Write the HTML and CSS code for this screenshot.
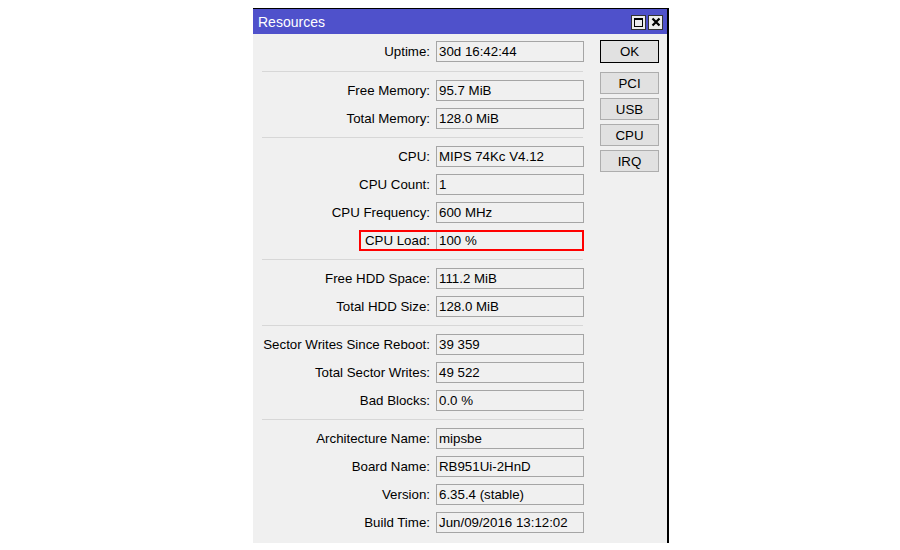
FILE: index.html
```html
<!DOCTYPE html>
<html lang="en">
<head>
    <meta charset="UTF-8">
    <title>Resources</title>
    <link rel="stylesheet" href="styles.css">
</head>
<body>
    <div class="window">
        <div class="titlebar">
            <span class="title">Resources</span>
            <div class="title-buttons">
                <span class="tb-btn"><span class="max-icon"></span></span>
                <span class="tb-btn">
                    <svg width="10" height="10" viewBox="0 0 10 10"><path d="M1.5 1.5 L8.5 8.5 M8.5 1.5 L1.5 8.5" stroke="#000" stroke-width="2.2"/></svg>
                </span>
            </div>
        </div>

        <div class="content">
            <div class="form">
                <div class="group">
                    <div class="row"><label>Uptime:</label><div class="field">30d 16:42:44</div></div>
                </div>
                <div class="sep first"></div>
                <div class="group">
                    <div class="row"><label>Free Memory:</label><div class="field">95.7 MiB</div></div>
                    <div class="row"><label>Total Memory:</label><div class="field">128.0 MiB</div></div>
                </div>
                <div class="sep"></div>
                <div class="group">
                    <div class="row"><label>CPU:</label><div class="field">MIPS 74Kc V4.12</div></div>
                    <div class="row"><label>CPU Count:</label><div class="field">1</div></div>
                    <div class="row"><label>CPU Frequency:</label><div class="field">600 MHz</div></div>
                    <div class="row highlighted"><label>CPU Load:</label><div class="field">100 %</div><span class="mark"></span></div>
                </div>
                <div class="sep"></div>
                <div class="group">
                    <div class="row"><label>Free HDD Space:</label><div class="field">111.2 MiB</div></div>
                    <div class="row"><label>Total HDD Size:</label><div class="field">128.0 MiB</div></div>
                </div>
                <div class="sep"></div>
                <div class="group">
                    <div class="row"><label>Sector Writes Since Reboot:</label><div class="field">39 359</div></div>
                    <div class="row"><label>Total Sector Writes:</label><div class="field">49 522</div></div>
                    <div class="row"><label>Bad Blocks:</label><div class="field">0.0 %</div></div>
                </div>
                <div class="sep"></div>
                <div class="group">
                    <div class="row"><label>Architecture Name:</label><div class="field">mipsbe</div></div>
                    <div class="row"><label>Board Name:</label><div class="field">RB951Ui-2HnD</div></div>
                    <div class="row"><label>Version:</label><div class="field">6.35.4 (stable)</div></div>
                    <div class="row"><label>Build Time:</label><div class="field">Jun/09/2016 13:12:02</div></div>
                </div>
            </div>

            <div class="buttons">
                <button class="btn default">OK</button>
                <div class="btn-list">
                    <button class="btn">PCI</button>
                    <button class="btn">USB</button>
                    <button class="btn">CPU</button>
                    <button class="btn">IRQ</button>
                </div>
            </div>
        </div>
    </div>
</body>
</html>
```

FILE: styles.css
```css
body {
    margin: 0;
    padding: 0;
    background-color: #ffffff;
    font-family: 'Liberation Sans', Arial, sans-serif;
    font-size: 13.3px;
    color: #000;
}

.window {
    margin: 8px 0 0 253px;
    width: 414px;
    height: 534px;
    border-top: 1px solid #000;
    border-right: 2px solid #000;
    background-color: #f0f0f0;
    overflow: hidden;
}

.titlebar {
    height: 25px;
    background-color: #4f51cb; /* Winbox blue */
    display: flex;
    align-items: center;
    justify-content: space-between;
    padding: 0 4px 0 5px;
}

.title {
    color: #fff;
    font-size: 14px;
}

.title-buttons {
    display: flex;
    gap: 2px;
    margin-top: 1px;
}

.tb-btn {
    width: 13px;
    height: 13px;
    border: 1px solid #333;
    background-color: #ececec;
    display: flex;
    align-items: center;
    justify-content: center;
}

.max-icon {
    width: 7px;
    height: 6px;
    border: 1px solid #000;
    border-top-width: 2px;
}

.content {
    display: flex;
    padding-left: 9px;
}

.form {
    width: 322px;
    padding-top: 7px;
}

.group {
    display: flex;
    flex-direction: column;
    gap: 7px;
}

.sep {
    height: 1px;
    background-color: #d7d7d7;
    margin: 8px 1px 8px 0;
}

.sep.first {
    margin-top: 9px;
}

.row {
    display: flex;
    align-items: center;
    position: relative;
    height: 21px;
}

.row label {
    width: 168px;
    padding-right: 6px;
    text-align: right;
    white-space: nowrap;
}

.field {
    flex: 1;
    height: 19px;
    line-height: 19px;
    border: 1px solid #a5a5a5;
    padding-left: 2px;
    white-space: nowrap;
}

/* red annotation round the CPU Load row */
.mark {
    position: absolute;
    top: 0;
    right: 0;
    bottom: 0;
    left: 97px;
    border: 2px solid #f00;
}

.buttons {
    margin-left: 16px;
    width: 59px;
    padding-top: 6px;
    display: flex;
    flex-direction: column;
}

.btn {
    font-family: 'Liberation Sans', Arial, sans-serif;
    font-size: 13.3px;
    color: #000;
    background-color: #e1e1e1;
    border: 1px solid #adadad;
    height: 22px;
    padding: 0;
    margin: 0;
}

.btn.default {
    height: 23px;
    border-color: #000;
    margin-bottom: 9px;
}

.btn-list {
    display: flex;
    flex-direction: column;
    gap: 4px;
}
```
